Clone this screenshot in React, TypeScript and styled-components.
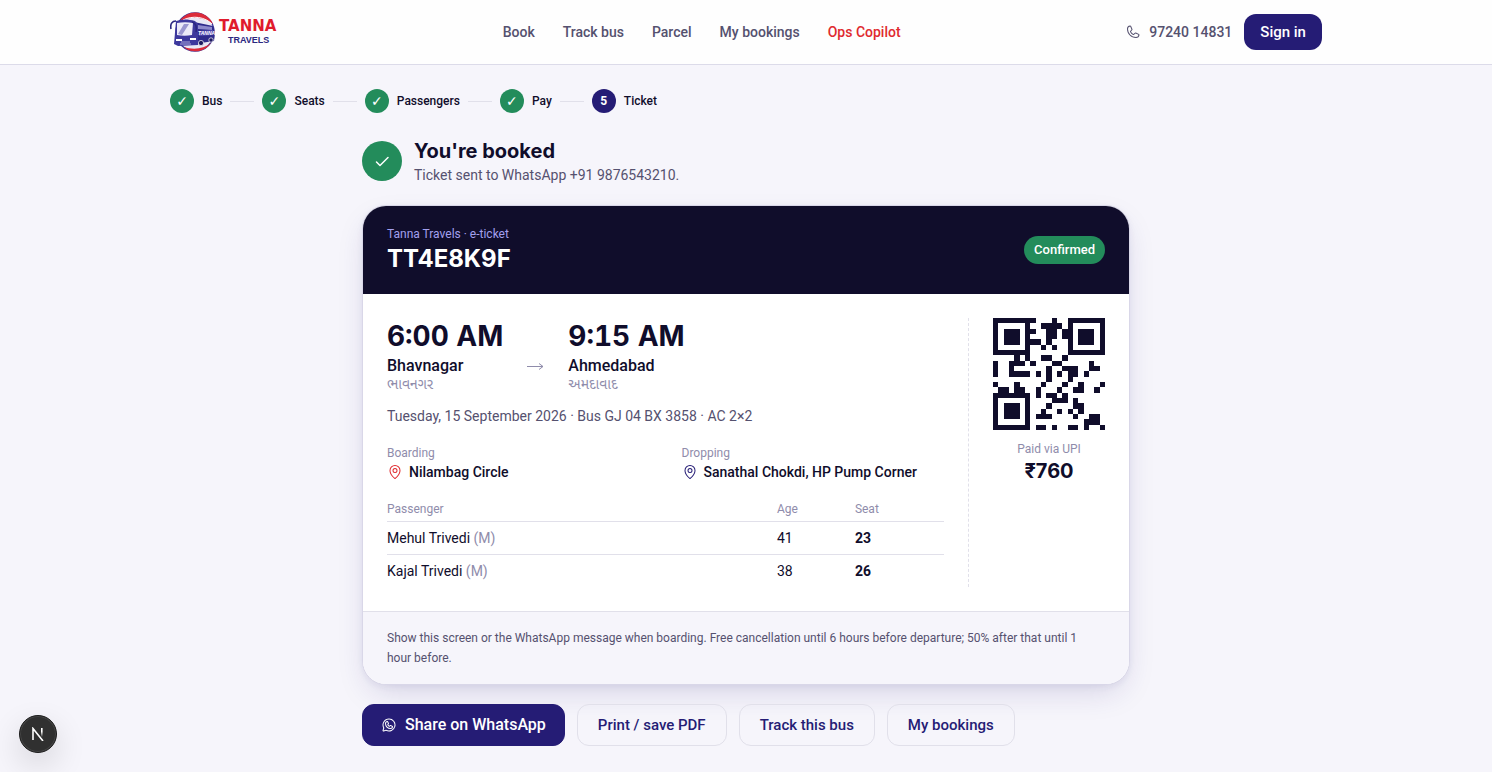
import React from "react";
import styled, { createGlobalStyle, css } from "styled-components";
import { PiCheckBold, PiMapPin, PiPhone, PiWhatsappLogo } from "react-icons/pi";

const navy = "#251c75";
const ink = "#100d2b";
const muted = "#55516f";
const faint = "#8f8cab";
const line = "#e1e0ea";
const green = "#238c5b";
const red = "#e02a2f";
const page = "#f6f5fb";
const display = `Inter, "Liberation Sans", sans-serif`;

const GlobalStyle = createGlobalStyle`
  * { box-sizing: border-box; }
  body {
    margin: 0;
    background: ${page};
    color: ${ink};
    font: 400 14px/20px Roboto, "Noto Sans", "Liberation Sans", sans-serif;
  }
  button { font: inherit; cursor: pointer; }
  a { color: inherit; text-decoration: none; }
  h1, p, dl, dd, ol { margin: 0; padding: 0; }
`;

const TopBar = styled.header`
  background: #fefefe;
  border-bottom: 1px solid #dcdbe9;
`;
const TopBarInner = styled.div`
  max-width: 1200px;
  height: 64px;
  margin: 0 auto;
  padding: 0 24px;
  display: flex;
  align-items: center;
  justify-content: space-between;
`;
const LogoLink = styled.a`
  display: flex;
`;
const Nav = styled.nav`
  display: flex;
  gap: 28px;
`;
const NavLink = styled.a<{ $accent?: boolean }>`
  font-weight: 500;
  color: ${(p) => (p.$accent ? red : muted)};
`;
const Account = styled.div`
  display: flex;
  align-items: center;
  gap: 12px;
`;
const PhoneLink = styled.a`
  display: flex;
  align-items: center;
  gap: 8px;
  font-weight: 500;
  color: ${muted};
`;
const SignIn = styled.button`
  height: 36px;
  padding: 0 16px;
  border: 0;
  border-radius: 12px;
  background: ${navy};
  color: #fff;
  font-size: 15px;
  font-weight: 500;
`;

const Main = styled.main`
  max-width: 1200px;
  margin: 0 auto;
  padding: 24px;
`;
const Steps = styled.ol`
  display: flex;
  align-items: center;
  gap: 8px;
  list-style: none;
`;
const Step = styled.li`
  display: flex;
  align-items: center;
  gap: 8px;
  font-size: 12px;
  font-weight: 500;

  & + &::before {
    content: "";
    width: 24px;
    height: 1px;
    background: ${line};
  }
`;
const StepDot = styled.span<{ $current?: boolean }>`
  display: grid;
  place-items: center;
  width: 24px;
  height: 24px;
  border-radius: 50%;
  background: ${(p) => (p.$current ? navy : green)};
  color: #fff;
  font-family: Roboto, "DejaVu Sans", sans-serif;
  font-size: ${(p) => (p.$current ? 12 : 14)}px;
  font-weight: 700;
`;

const Column = styled.section`
  max-width: 768px;
  margin: 24px auto 0;
`;
const Booked = styled.div`
  display: flex;
  align-items: center;
  gap: 12px;
  margin-bottom: 20px;
`;
const BookedMark = styled.span`
  display: grid;
  place-items: center;
  width: 40px;
  height: 40px;
  border-radius: 50%;
  background: ${green};
  color: #fff;
`;
const Title = styled.h1`
  font: 700 20px/28px ${display};
`;
const Sub = styled.p`
  color: ${muted};
`;

const Ticket = styled.article`
  overflow: hidden;
  border: 1px solid #d9d7e8;
  border-radius: 24px;
  background: #fff;
  box-shadow: 0 12px 32px -8px rgba(37, 28, 117, 0.18), 0 2px 6px rgba(37, 28, 117, 0.06);
`;
const TicketHead = styled.header`
  display: flex;
  align-items: center;
  justify-content: space-between;
  padding: 19px 24px;
  background: ${ink};
  color: #fff;
`;
const Issuer = styled.p`
  font-size: 12px;
  line-height: 18px;
  color: #a3a0ee;
`;
const Code = styled.p`
  font: 700 24px/32px ${display};
`;
const Status = styled.span`
  padding: 4px 10px;
  border-radius: 14px;
  background: ${green};
  font-size: 13px;
  font-weight: 500;
`;
const TicketBody = styled.div`
  display: grid;
  grid-template-columns: minmax(0, 1fr) auto;
  gap: 24px;
  padding: 24px;
`;
const Route = styled.div`
  display: flex;
  align-items: center;
  gap: 24px;
`;
const Time = styled.p`
  font: 700 28px/36px ${display};
  font-variant-numeric: tabular-nums;
`;
const City = styled.p`
  font-size: 16px;
  line-height: 24px;
  font-weight: 500;
`;
const LocalName = styled.p`
  font-family: "Noto Sans Gujarati", "Noto Sans", sans-serif;
  font-size: 14px;
  line-height: 16px;
  color: ${faint};
`;
const Arrow = styled.svg`
  margin-top: 20px;
  color: ${faint};
`;
const Journey = styled.p`
  margin-top: 12px;
  color: ${muted};
`;
const Stops = styled.dl`
  display: grid;
  grid-template-columns: 1fr 1fr;
  gap: 32px;
  margin-top: 18px;
`;
const StopLabel = styled.dt`
  font-size: 12px;
  line-height: 18px;
  color: ${faint};
`;
const StopPlace = styled.dd<{ $color: string }>`
  display: flex;
  align-items: center;
  gap: 6px;
  font-weight: 500;

  svg {
    color: ${(p) => p.$color};
  }
`;
const Passengers = styled.table`
  width: 100%;
  margin-top: 19px;
  border-collapse: separate;
  border-spacing: 0;
  text-align: left;

  th {
    padding: 0 0 4px;
    border-bottom: 1px solid ${line};
    font-size: 12px;
    line-height: 16px;
    font-weight: 400;
    color: ${faint};
  }
  td {
    padding: 6px 0;
    font-variant-numeric: tabular-nums;
  }
  tr + tr td {
    border-top: 1px solid ${line};
  }
`;
const Cell = styled.th<{ $share: number }>`
  width: ${(p) => p.$share}%;
`;
const Gender = styled.span`
  color: ${faint};
`;
const Seat = styled.td`
  font-weight: 700;
`;
const Payment = styled.aside`
  padding-left: 24px;
  border-left: 1px dashed ${line};
  text-align: center;
`;
const PaidVia = styled.p`
  margin-top: 10px;
  font-size: 12px;
  line-height: 18px;
  color: ${faint};
`;
const Amount = styled.p`
  font: 700 20px/26px ${display};
`;
const TicketNote = styled.footer`
  padding: 16px 32px 16px 24px;
  border-top: 1px solid ${line};
  background: ${page};
  font-size: 12px;
  color: ${muted};
`;

const Actions = styled.div`
  display: flex;
  flex-wrap: wrap;
  gap: 12px;
  margin-top: 19px;
`;
const Action = styled.button<{ $primary?: boolean }>`
  display: flex;
  align-items: center;
  gap: 8px;
  height: 42px;
  padding: 0 20px;
  border: 1px solid ${line};
  border-radius: 12px;
  background: transparent;
  color: ${navy};
  font-size: 15px;
  font-weight: 500;
  ${(p) =>
    p.$primary &&
    css`
      border-color: ${navy};
      background: ${navy};
      color: #fff;
      font-size: 16px;
      padding: 0 18px;
    `}
`;
const DevBadge = styled.button`
  position: fixed;
  left: 19px;
  bottom: 19px;
  display: grid;
  place-items: center;
  width: 38px;
  height: 38px;
  padding: 0;
  border: 1px solid #1c1c1c;
  border-radius: 50%;
  background: #303030;
  box-shadow: inset 0 0 0 1px #454545, 0 12px 32px rgba(0, 0, 0, 0.14);
`;

const QR = [
  "000000010001000000000",
  "000000000111100000000",
  "000000010011010000000",
  "000000000011010000000",
  "000000011010000000000",
  "000000000101000000000",
  "000000000000000000000",
  "000010100110010000000",
  "100111010001100000100",
  "100100000010011100110",
  "100111101010101101000",
  "000000000010001000000",
  "100010000100010010001",
  "011011001000100110010",
  "000000001011010000000",
  "000000000001110100000",
  "000000000010000110000",
  "000000000100101010000",
  "000000001110000100110",
  "000000000000000001110",
  "000000001101001101001",
];
const modules = QR.flatMap((row, y) =>
  [...row].map((bit, x) => (bit === "1" ? `M${x} ${y}h1v1h-1z` : ""))
).join("");
const finder = (x: number, y: number) => `M${x} ${y}h7v7h-7zm1 1v5h5v-5zm1 1h3v3h-3z`;

function QrCode() {
  return (
    <svg width="112" height="112" viewBox="0 0 21 21" role="img" aria-label="Ticket QR code" display="block" shapeRendering="crispEdges">
      <path fill={ink} fillRule="evenodd" d={finder(0, 0) + finder(14, 0) + finder(0, 14)} />
      <path fill={ink} d={modules} />
    </svg>
  );
}

function Logo() {
  return (
    <svg width="108" height="42" viewBox="0 0 108 42" role="img" aria-label="Tanna Travels">
      <circle cx="25" cy="21" r="19" fill="#e9e8f5" stroke="#3a3597" strokeWidth="1.4" />
      <path d="M9 11a19 19 0 0 1 34 2c-9-7-22-9-34-2z" fill="#dc2b3a" />
      <path d="M13 9c10-5 22-3 29 4" fill="none" stroke="#fff" strokeWidth="1" />
      <path d="M24 11l19 4c2 4 2 10 1 15l-20 3z" fill="#2f2b8c" />
      <path d="M6 10c6-2 12-2 19 0l3 3v21l-20 1-4-2z" fill="#3d389d" />
      <path d="M7 12c5-1 11-1 16 0l-1 12c-5 1-10 1-15 0z" fill="#eceaf8" />
      <path d="M8 23l6-10h5l-7 11z" fill="#9b97d0" />
      <path d="M1 18c-1-5 1-8 5-8M26 21c1-6 0-9-4-10" fill="none" stroke="#2a2680" strokeWidth="1.6" />
      <path d="M6 28h6v2H6zm14-1h6v2h-6z" fill="#fff" />
      <path d="M11 31h9M10 33h11" stroke="#c9c7ea" strokeWidth="0.8" />
      <path d="M28 14l14 2v3l-14-1z" fill="#8d89cc" />
      <path d="M29 20l14-1v5l-14 1z" fill="#514bb0" />
      <text x="28" y="24" fill="#fff" fontFamily="Liberation Sans" fontSize="5" fontWeight="700" fontStyle="italic">TANNA</text>
      <circle cx="31" cy="32" r="2.6" fill="#1d195f" stroke="#fff" strokeWidth="0.7" />
      <circle cx="41" cy="29" r="2.2" fill="#1d195f" stroke="#fff" strokeWidth="0.7" />
      <path d="M14 36c9 3 20 2 27-4-5 7-12 9-18 8-4 0-7-2-9-4z" fill="#dc2b3a" />
      <text x="49" y="20" fill="#e01b2c" fontFamily="DejaVu Sans" fontSize="15" fontWeight="700">TANNA</text>
      <text x="58" y="32" fill="#2b2780" fontFamily="Liberation Sans" fontSize="9" fontWeight="700">TRAVELS</text>
    </svg>
  );
}

const people = [
  { name: "Mehul Trivedi", gender: "(M)", age: 41, seat: 23 },
  { name: "Kajal Trivedi", gender: "(M)", age: 38, seat: 26 },
];

export default function App() {
  return (
    <>
      <GlobalStyle />
      <TopBar>
        <TopBarInner>
          <LogoLink href="#"><Logo /></LogoLink>
          <Nav>
            {["Book", "Track bus", "Parcel", "My bookings"].map((t) => (
              <NavLink href="#" key={t}>{t}</NavLink>
            ))}
            <NavLink href="#" $accent>Ops Copilot</NavLink>
          </Nav>
          <Account>
            <PhoneLink href="#"><PiPhone size={16} />97240 14831</PhoneLink>
            <SignIn>Sign in</SignIn>
          </Account>
        </TopBarInner>
      </TopBar>
      <Main>
        <Steps>
          {["Bus", "Seats", "Passengers", "Pay"].map((s) => (
            <Step key={s}><StepDot>✓</StepDot>{s}</Step>
          ))}
          <Step aria-current="step"><StepDot $current>5</StepDot>Ticket</Step>
        </Steps>
        <Column>
          <Booked>
            <BookedMark><PiCheckBold size={16} /></BookedMark>
            <div>
              <Title>You're booked</Title>
              <Sub>Ticket sent to WhatsApp +91 9876543210.</Sub>
            </div>
          </Booked>
          <Ticket>
            <TicketHead>
              <div>
                <Issuer>Tanna Travels · e-ticket</Issuer>
                <Code>TT4E8K9F</Code>
              </div>
              <Status>Confirmed</Status>
            </TicketHead>
            <TicketBody>
              <div>
                <Route>
                  <div>
                    <Time>6:00 AM</Time>
                    <City>Bhavnagar</City>
                    <LocalName lang="gu">ભાવનગર</LocalName>
                  </div>
                  <Arrow width="17" height="10" viewBox="0 0 17 10" fill="none" stroke="currentColor" aria-hidden="true">
                    <path d="M0 5.500h16M12 2.500l4 3-4 3" />
                  </Arrow>
                  <div>
                    <Time>9:15 AM</Time>
                    <City>Ahmedabad</City>
                    <LocalName lang="gu">અમદાવાદ</LocalName>
                  </div>
                </Route>
                <Journey>Tuesday, 15 September 2026 · Bus GJ 04 BX 3858 · AC 2×2</Journey>
                <Stops>
                  <div>
                    <StopLabel>Boarding</StopLabel>
                    <StopPlace $color={red}><PiMapPin size={16} />Nilambag Circle</StopPlace>
                  </div>
                  <div>
                    <StopLabel>Dropping</StopLabel>
                    <StopPlace $color={navy}><PiMapPin size={16} />Sanathal Chokdi, HP Pump Corner</StopPlace>
                  </div>
                </Stops>
                <Passengers>
                  <thead>
                    <tr>
                      <Cell $share={70}>Passenger</Cell>
                      <Cell $share={14}>Age</Cell>
                      <Cell $share={16}>Seat</Cell>
                    </tr>
                  </thead>
                  <tbody>
                    {people.map((p) => (
                      <tr key={p.seat}>
                        <td>{p.name} <Gender>{p.gender}</Gender></td>
                        <td>{p.age}</td>
                        <Seat>{p.seat}</Seat>
                      </tr>
                    ))}
                  </tbody>
                </Passengers>
              </div>
              <Payment>
                <QrCode />
                <PaidVia>Paid via UPI</PaidVia>
                <Amount>₹760</Amount>
              </Payment>
            </TicketBody>
            <TicketNote>
              Show this screen or the WhatsApp message when boarding. Free cancellation until 6 hours
              before departure; 50% after that until 1 hour before.
            </TicketNote>
          </Ticket>
          <Actions>
            <Action $primary><PiWhatsappLogo size={16} />Share on WhatsApp</Action>
            <Action>Print / save PDF</Action>
            <Action>Track this bus</Action>
            <Action>My bookings</Action>
          </Actions>
        </Column>
      </Main>
      <DevBadge aria-label="Open developer tools">
        <svg width="14" height="14" viewBox="0 0 14 14" fill="none" aria-hidden="true">
          <defs>
            <linearGradient id="fade" x1="0" y1="0" x2="0" y2="1">
              <stop offset="0.4" stopColor="#fff" />
              <stop offset="1" stopColor="#fff" stopOpacity="0" />
            </linearGradient>
          </defs>
          <path d="M2 13V1.500L12 14" stroke="#fff" strokeWidth="1.600" />
          <rect x="10" y="1" width="1.600" height="9" fill="url(#fade)" />
        </svg>
      </DevBadge>
    </>
  );
}
